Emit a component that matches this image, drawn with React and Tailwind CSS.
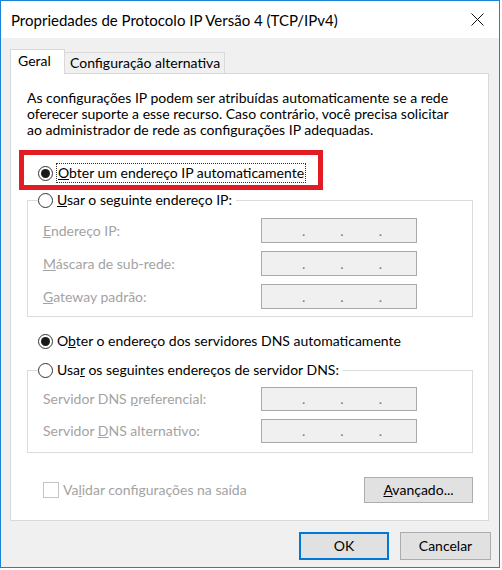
import React from 'react';

const Radio = ({ checked }) => (
    <span className="w-[15px] h-[15px] rounded-full border border-[#333333] bg-white flex items-center justify-center shrink-0">
        {checked && <span className="w-[9px] h-[9px] rounded-full bg-[#1a1a1a]" />}
    </span>
);

const IpBox = ({ h = 'h-[25px]' }) => (
    <div className={`w-[156px] ${h} border border-[#a9a9a9] bg-[#f0f0f0] flex items-end pb-[4px] text-[#7a7a7a] leading-none`}>
        <span className="ml-[40px]">.</span>
        <span className="ml-[35px]">.</span>
        <span className="ml-[35px]">.</span>
    </div>
);

const Field = ({ label, h }) => (
    <div className="flex items-center">
        <span className="w-[223px] pl-[5px] text-[#a3a3a3]">{label}</span>
        <IpBox h={h} />
    </div>
);

export default function App() {
    return (
        <div className="w-[502px] h-[570px] bg-white text-black text-[14px] leading-[16px] whitespace-nowrap" style={{ fontFamily: 'Lato, "Noto Sans", sans-serif' }}>
            <div className="w-[500px] h-[568px] border border-[#1883d7] bg-[#f0f0f0] flex flex-col">
                {/* Title bar */}
                <div className="h-[37px] bg-white flex items-center justify-between pl-[10px] pr-[14px] shrink-0">
                    <span className="text-[15px]">Propriedades de Protocolo IP Versão 4 (TCP/IPv4)</span>
                    <svg width="13" height="13" viewBox="0 0 13 13" className="mr-[1px]">
                        <path d="M0.5 0.5 L12.5 12.5 M12.5 0.5 L0.5 12.5" stroke="#111" strokeWidth="1" />
                    </svg>
                </div>

                {/* Tabs */}
                <div className="pl-[9px] pt-[11px] flex items-end">
                    <div className="relative z-10 h-[25px] -mb-px w-[55px] bg-white border border-b-0 border-[#d9d9d9] pl-[7px] pt-[3px]">Geral</div>
                    <div className="h-[21px] w-[160px] border border-l-0 border-b-0 border-[#d9d9d9] bg-[#f0f0f0] pl-[5px] pt-[2px]">Configuração alternativa</div>
                </div>

                {/* Panel */}
                <div className="ml-[9px] w-[479px] h-[448px] bg-white border border-[#d9d9d9] flex flex-col shrink-0">
                    <p className="pl-[16px] pt-[16px]">
                        As configurações IP podem ser atribuídas automaticamente se a rede<br />
                        oferecer suporte a esse recurso. Caso contrário, você precisa solicitar<br />
                        ao administrador de rede as configurações IP adequadas.
                    </p>

                    <div className="relative mt-[25px] h-[20px] pl-[27px] flex items-center gap-[3px]">
                        <Radio checked />
                        <span className="border border-dotted border-[#333] px-px h-[20px] flex items-center">
                            <span><u>O</u>bter um endereço IP automaticamente</span>
                        </span>
                        <div className="absolute left-[8px] top-[-13px] w-[304px] h-[40px] border-[5px] border-[#e31b23]" />
                    </div>

                    <fieldset className="ml-[16px] mt-[7px] w-[446px] border border-[#dcdcdc] px-[10px] pt-[8px] pb-[7px] flex flex-col gap-[8px]">
                        <legend className="h-[20px] flex items-center gap-[4px] pr-[4px] bg-white">
                            <Radio />
                            <span><u>U</u>sar o seguinte endereço IP:</span>
                        </legend>
                        <Field label={<><u>E</u>ndereço IP:</>} />
                        <Field label={<><u>M</u>áscara de sub-rede:</>} />
                        <Field label={<><u>G</u>ateway padrão:</>} />
                    </fieldset>

                    <div className="mt-[14px] h-[20px] pl-[27px] flex items-center gap-[4px]">
                        <Radio checked />
                        <span>O<u>b</u>ter o endereço dos servidores DNS automaticamente</span>
                    </div>

                    <fieldset className="ml-[16px] mt-[9px] w-[446px] border border-[#dcdcdc] px-[10px] pt-[7px] pb-[9px] flex flex-col gap-[8px]">
                        <legend className="h-[20px] flex items-center gap-[4px] pr-[4px] bg-white">
                            <Radio />
                            <span>Usa<u>r</u> os seguintes endereços de servidor DNS:</span>
                        </legend>
                        <Field label={<>Servidor DNS <u>p</u>referencial:</>} h="h-[24px]" />
                        <Field label={<>Servidor <u>D</u>NS alternativo:</>} h="h-[24px]" />
                    </fieldset>

                    <div className="mt-[24px] h-[26px] pl-[32px] pr-[15px] flex items-center justify-between">
                        <div className="flex items-center gap-[4px] text-[#a3a3a3]">
                            <span className="w-[16px] h-[16px] border border-[#c4c4c4] bg-white" />
                            <span>Va<u>l</u>idar configurações na saída</span>
                        </div>
                        <button className="w-[109px] h-[26px] bg-[#e1e1e1] border border-[#adadad]">
                            <u>A</u>vançado...
                        </button>
                    </div>
                </div>

                {/* Dialog buttons */}
                <div className="mt-[11px] pr-[8px] flex justify-end gap-[11px]">
                    <button className="w-[90px] h-[28px] bg-[#e1e1e1] border-2 border-[#0078d7]">OK</button>
                    <button className="w-[91px] h-[28px] bg-[#e1e1e1] border border-[#adadad]">Cancelar</button>
                </div>
            </div>
        </div>
    );
}
